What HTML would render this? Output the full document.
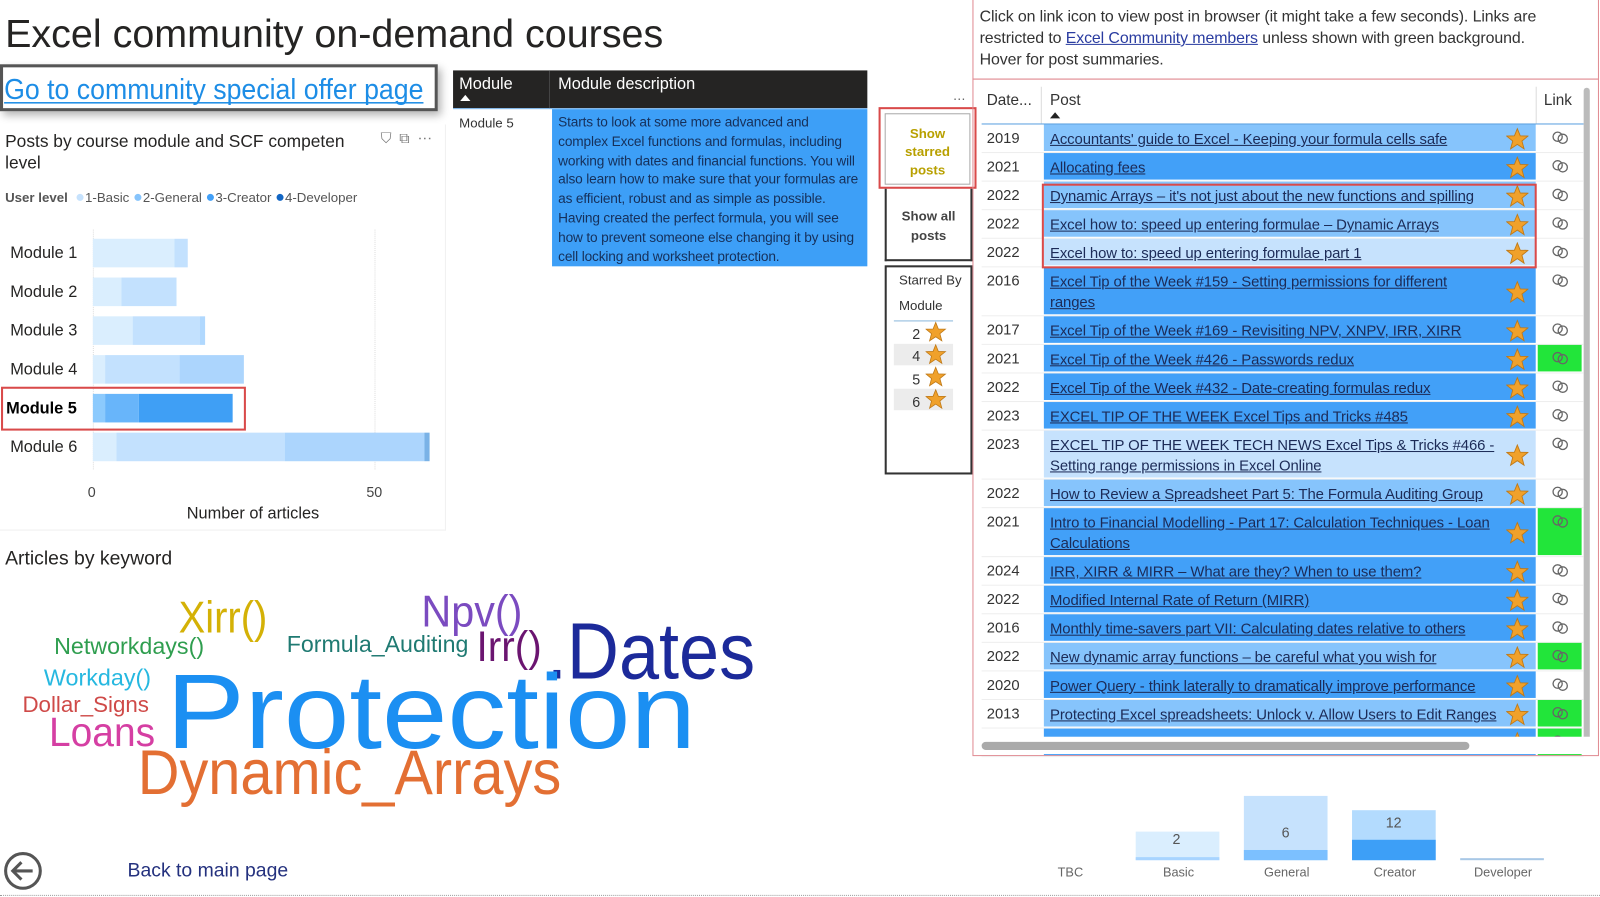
<!DOCTYPE html>
<html><head><meta charset="utf-8">
<style>
*{margin:0;padding:0;box-sizing:border-box}
body{width:1600px;height:897px;position:relative;overflow:hidden;background:#fff;font-family:"Liberation Sans",sans-serif;color:#252423}
#w{position:absolute;left:0;top:0;width:1568px;height:879px;transform:scale(1.0204);transform-origin:0 0}
.a{position:absolute}
.row{position:absolute;left:962px;width:590px}
.row .d{position:absolute;left:5px;top:6px;font-size:14.5px;color:#333}
.row .p{position:absolute;left:61px;top:0;width:482px;bottom:2px;padding:5px 30px 0 6px;font-size:14.6px;line-height:20px;color:#1c2b57;text-decoration:underline;letter-spacing:-0.1px}
.row .s{position:absolute;left:514px}
.row .l{position:absolute;left:545px;width:43px;top:0;bottom:2px}
.row .l svg{position:absolute;left:13px;top:5px}
.row .hl{position:absolute;left:0;right:0;bottom:0;height:1px;background:#eee}
.D{background:#42a0f8}.M{background:#86c4fc}.L{background:#c6e2fd}
.g{background:#22e53a}
.bar{position:absolute;height:28px}
.lab{position:absolute;top:848px;font-size:12.5px;color:#666;width:80px;text-align:center}
</style></head><body><div id="w">

<svg class="a" style="left:0;top:0" width="960" height="879">
<text x="5" y="46" font-size="38" fill="#252423" textLength="645" lengthAdjust="spacingAndGlyphs" font-family="Liberation Sans">Excel community on-demand courses</text>
<g font-family="Liberation Sans">
<text x="175" y="620" font-size="44" fill="#d4b106" textLength="87" lengthAdjust="spacingAndGlyphs">Xirr()</text>
<text x="413" y="614" font-size="44" fill="#7b4bc0" textLength="99" lengthAdjust="spacingAndGlyphs">Npv()</text>
<text x="53" y="641" font-size="23" fill="#2f9e4f" textLength="147" lengthAdjust="spacingAndGlyphs">Networkdays()</text>
<text x="281" y="639" font-size="23" fill="#1f7a72" textLength="178" lengthAdjust="spacingAndGlyphs">Formula_Auditing</text>
<text x="467" y="648" font-size="42" fill="#6b1570" textLength="64" lengthAdjust="spacingAndGlyphs">Irr()</text>
<text x="536" y="665" font-size="78" fill="#1c2a9a" textLength="204" lengthAdjust="spacingAndGlyphs">.Dates</text>
<text x="43" y="672" font-size="23" fill="#26b8e0" textLength="105" lengthAdjust="spacingAndGlyphs">Workday()</text>
<text x="22" y="698" font-size="22" fill="#cf4a48" textLength="124" lengthAdjust="spacingAndGlyphs">Dollar_Signs</text>
<text x="48" y="731" font-size="40" fill="#d53fa3" textLength="104" lengthAdjust="spacingAndGlyphs">Loans</text>
<text x="163" y="733" font-size="104" fill="#1b8ff2" textLength="519" lengthAdjust="spacingAndGlyphs">Protection</text>
<text x="135" y="778" font-size="62" fill="#e36f33" textLength="415" lengthAdjust="spacingAndGlyphs">Dynamic_Arrays</text>
</g>
</svg>

<div class="a" style="left:0;top:63px;width:429px;height:46px;border:3px solid #555;box-shadow:3px 4px 8px rgba(0,0,0,.3);background:#fff"></div>
<svg class="a" style="left:0;top:63px" width="430" height="46"><text x="4" y="34" font-size="28" fill="#1d8de6" textLength="411" lengthAdjust="spacingAndGlyphs" font-family="Liberation Sans">Go to community special offer page</text><rect x="4" y="37" width="411" height="1.5" fill="#1d8de6"/></svg>

<div class="a" style="left:0;top:122px;width:437px;height:398px;border-right:1px solid #f0f0f0;border-bottom:1px solid #f0f0f0"></div>
<div class="a" style="left:5px;top:128px;font-size:17px;line-height:21px;width:370px;color:#252423">Posts by course module and SCF competen<br>level</div>
<div class="a" style="left:373px;top:127px;font-size:14px;color:#777">⛉ &nbsp;⧉ &nbsp;⋯</div>
<div class="a" style="left:5px;top:185px;font-size:13px;color:#555;white-space:nowrap"><b>User level</b> &nbsp;<span style="color:#c6e2fd;font-size:16px">●</span>1-Basic <span style="color:#86c4fc;font-size:16px">●</span>2-General <span style="color:#42a0f8;font-size:16px">●</span>3-Creator <span style="color:#1266c4;font-size:16px">●</span>4-Developer</div>
<div class="a" style="left:91px;top:225px;height:235px;border-left:1px dotted #ddd"></div>
<div class="a" style="left:367px;top:225px;height:235px;border-left:1px dotted #ddd"></div>
<div class="a" style="left:10px;top:230px;font-size:16px;line-height:38px">Module 1<br>Module 2<br>Module 3<br>Module 4<br><b style="color:#000;margin-left:-4px">Module 5</b><br>Module 6</div>
<div class="bar" style="left:91px;top:234px;width:80px;background:#daeefe"></div><div class="bar" style="left:171px;top:234px;width:13px;background:#c3e1fe"></div>
<div class="bar" style="left:91px;top:272px;width:28px;background:#daeefe"></div><div class="bar" style="left:119px;top:272px;width:54px;background:#c3e1fe"></div>
<div class="bar" style="left:91px;top:310px;width:39px;background:#daeefe"></div><div class="bar" style="left:130px;top:310px;width:66px;background:#c3e1fe"></div><div class="bar" style="left:196px;top:310px;width:5px;background:#b0d8fe"></div>
<div class="bar" style="left:91px;top:348px;width:12px;background:#daeefe"></div><div class="bar" style="left:103px;top:348px;width:73px;background:#c3e1fe"></div><div class="bar" style="left:176px;top:348px;width:63px;background:#acd5fd"></div>
<div class="bar" style="left:91px;top:386px;width:12px;background:#8ccafd"></div><div class="bar" style="left:103px;top:386px;width:33px;background:#68b5fa"></div><div class="bar" style="left:136px;top:386px;width:92px;background:#3f9ff5"></div>
<div class="a" style="left:1px;top:379px;width:240px;height:43px;border:2px solid #d94a4a"></div>
<div class="bar" style="left:91px;top:424px;width:23px;background:#daeefe"></div><div class="bar" style="left:114px;top:424px;width:165px;background:#c3e1fe"></div><div class="bar" style="left:279px;top:424px;width:137px;background:#acd5fd"></div><div class="bar" style="left:416px;top:424px;width:5px;background:#7ab2e6"></div>
<div class="a" style="left:86px;top:474px;font-size:14px;color:#444">0</div>
<div class="a" style="left:359px;top:474px;font-size:14px;color:#444">50</div>
<div class="a" style="left:183px;top:495px;font-size:16px;color:#252423">Number of articles</div>

<div class="a" style="left:5px;top:537px;font-size:19px;color:#252423">Articles by keyword</div>

<div class="a" style="left:444px;top:69px;width:406px;height:37px;background:#252423"></div>
<div class="a" style="left:538px;top:69px;width:1px;height:37px;background:#444"></div>
<div class="a" style="left:450px;top:74px;font-size:16px;color:#fff">Module</div>
<div class="a" style="left:451px;top:93px;width:0;height:0;border-left:5px solid transparent;border-right:5px solid transparent;border-bottom:6px solid #fff"></div>
<div class="a" style="left:547px;top:74px;font-size:16px;color:#fff">Module description</div>
<div class="a" style="left:444px;top:106px;width:406px;height:1px;background:#7ab6ee"></div>
<div class="a" style="left:450px;top:113px;font-size:13px;color:#333">Module 5</div>
<div class="a" style="left:541px;top:107px;width:309px;height:154px;background:#3d9ff7;padding:4px 4px 0 6px;font-size:13.4px;line-height:18.8px;color:#16305a;letter-spacing:-0.15px;white-space:nowrap">Starts to look at some more advanced and<br>complex Excel functions and formulas, including<br>working with dates and financial functions. You will<br>also learn how to make sure that your formulas are<br>as efficient, robust and as simple as possible.<br>Having created the perfect formula, you will see<br>how to prevent someone else changing it by using<br>cell locking and worksheet protection.</div>

<div class="a" style="left:934px;top:90px;font-size:12px;color:#666">⋯</div>
<div class="a" style="left:861px;top:105px;width:96px;height:80px;border:2px solid #d94a4a"></div>
<div class="a" style="left:867px;top:111px;width:84px;height:70px;border:1px solid #aaa;text-align:center;font-size:13px;font-weight:bold;line-height:18px;color:#b8a000;padding-top:10px">Show<br>starred<br>posts</div>
<div class="a" style="left:867px;top:185px;width:86px;height:71px;border:2px solid #333;border-top:none;text-align:center;font-size:13px;font-weight:bold;line-height:19px;color:#444;padding-top:17px">Show all<br>posts</div>
<div class="a" style="left:867px;top:260px;width:86px;height:205px;border:2px solid #333"></div>
<div class="a" style="left:881px;top:262px;font-size:13px;line-height:25px;color:#333">Starred By<br>Module</div>
<div class="a" style="left:876px;top:314px;width:58px;height:1px;background:#8ab8dc"></div>
<div class="a" style="left:876px;top:337px;width:58px;height:21px;background:#ececec"></div>
<div class="a" style="left:876px;top:381px;width:58px;height:21px;background:#ececec"></div>
<div class="a" style="left:894px;top:316px;font-size:14px;line-height:22.3px;color:#333">2<br>4<br>5<br>6</div>
<svg class="a" style="left:907px;top:315px" width="22" height="90">
<defs><path id="st" d="M10 1 L12.6 7.4 19.5 7.6 14.1 12 16 19 10 15 4 19 5.9 12 0.5 7.6 7.4 7.4Z" fill="#f0a12b" stroke="#c07a18" stroke-width=".8"/></defs>
<use href="#st" y="0"/><use href="#st" y="22"/><use href="#st" y="44"/><use href="#st" y="66"/>
</svg>

<div class="a" style="left:953px;top:-2px;width:614px;height:80px;border:1.5px solid #e08a92"></div>
<div class="a" style="left:960px;top:6px;width:600px;font-size:15.6px;line-height:21px;color:#333;letter-spacing:-0.1px;white-space:nowrap">Click on link icon to view post in browser (it might take a few seconds). Links are<br>restricted to <span style="color:#2a3ca0;text-decoration:underline">Excel Community members</span> unless shown with green background.<br>Hover for post summaries.</div>
<div class="a" style="left:953px;top:77px;width:614px;height:664px;border:1.5px solid #e08a92"></div>
<div class="a" style="left:967px;top:90px;font-size:15px;color:#333">Date...</div>
<div class="a" style="left:1020px;top:85px;width:1px;height:36px;background:#ddd"></div>
<div class="a" style="left:1029px;top:90px;font-size:15px;color:#333">Post</div>
<div class="a" style="left:1029px;top:110px;width:0;height:0;border-left:5px solid transparent;border-right:5px solid transparent;border-bottom:6px solid #222"></div>
<div class="a" style="left:1505px;top:85px;width:1px;height:36px;background:#ddd"></div>
<div class="a" style="left:1513px;top:90px;font-size:15px;color:#333">Link</div>
<div class="a" style="left:962px;top:121px;width:590px;height:1px;background:#5aa0e0"></div>
<div class="a" style="left:1552px;top:86px;width:6px;height:640px;background:#bbb;border-radius:3px"></div>

<div id="rows"></div>
<div class="a" style="left:962px;top:722px;width:600px;height:17px;background:#fff"></div>
<div class="a" style="left:962px;top:727px;width:478px;height:8px;background:#aaa;border-radius:4px"></div>

<div class="a" style="left:1113px;top:815px;width:82px;height:28px;background:#daeefe"></div>
<div class="a" style="left:1113px;top:840px;width:82px;height:3px;background:#a8d4ff"></div>
<div class="a" style="left:1219px;top:780px;width:82px;height:63px;background:#c6e2fd"></div>
<div class="a" style="left:1219px;top:833px;width:82px;height:10px;background:#7cc0ff"></div>
<div class="a" style="left:1325px;top:794px;width:82px;height:49px;background:#b3dbfe"></div>
<div class="a" style="left:1325px;top:823px;width:82px;height:20px;background:#3d9ff7"></div>
<div class="a" style="left:1431px;top:841px;width:82px;height:2px;background:#a8c8e6"></div>
<div class="a" style="left:1149px;top:814px;font-size:14px;color:#555">2</div>
<div class="a" style="left:1256px;top:808px;font-size:14px;color:#555">6</div>
<div class="a" style="left:1358px;top:798px;font-size:14px;color:#555">12</div>
<div class="lab" style="left:1009px">TBC</div>
<div class="lab" style="left:1115px">Basic</div>
<div class="lab" style="left:1221px">General</div>
<div class="lab" style="left:1327px">Creator</div>
<div class="lab" style="left:1433px">Developer</div>

<svg class="a" style="left:3px;top:834px" width="40" height="40"><circle cx="19.5" cy="19.5" r="17" fill="none" stroke="#555" stroke-width="3"/><path d="M29 19.5H10M18 11L9.5 19.5 18 28" fill="none" stroke="#555" stroke-width="3"/></svg>
<div class="a" style="left:125px;top:843px;font-size:19px;color:#24317e">Back to main page</div>
<div class="a" style="left:0;top:877px;width:1600px;border-top:1px dotted #999"></div>

<script>
const R=[
["2019","Accountants' guide to Excel - Keeping your formula cells safe","M",0,28],
["2021","Allocating fees","D",0,28],
["2022","Dynamic Arrays – it's not just about the new functions and spilling","M",0,28],
["2022","Excel how to: speed up entering formulae – Dynamic Arrays","M",0,28],
["2022","Excel how to: speed up entering formulae part 1","L",0,28],
["2016","Excel Tip of the Week #159 - Setting permissions for different<br>ranges","D",0,48],
["2017","Excel Tip of the Week #169 - Revisiting NPV, XNPV, IRR, XIRR","D",0,28],
["2021","Excel Tip of the Week #426 - Passwords redux","D",1,28],
["2022","Excel Tip of the Week #432 - Date-creating formulas redux","D",0,28],
["2023","EXCEL TIP OF THE WEEK Excel Tips and Tricks #485","D",0,28],
["2023","EXCEL TIP OF THE WEEK TECH NEWS Excel Tips &amp; Tricks #466 -<br>Setting range permissions in Excel Online","L",0,48],
["2022","How to Review a Spreadsheet Part 5: The Formula Auditing Group","M",0,28],
["2021","Intro to Financial Modelling - Part 17: Calculation Techniques - Loan<br>Calculations","D",1,48],
["2024","IRR, XIRR &amp; MIRR – What are they? When to use them?","D",0,28],
["2022","Modified Internal Rate of Return (MIRR)","D",0,28],
["2016","Monthly time-savers part VII: Calculating dates relative to others","D",0,28],
["2022","New dynamic array functions – be careful what you wish for","M",1,28],
["2020","Power Query - think laterally to dramatically improve performance","D",0,28],
["2013","Protecting Excel spreadsheets: Unlock v. Allow Users to Edit Ranges","M",1,28],
["","","D",1,28]];
let y=122,h="";
const star='<svg width="22" height="22" viewBox="0 0 20 20"><path d="M10 1 L12.6 7.4 19.5 7.6 14.1 12 16 19 10 15 4 19 5.9 12 0.5 7.6 7.4 7.4Z" fill="#f0a12b" stroke="#c07a18" stroke-width=".8"/></svg>';
const lnk='<svg width="18" height="16" viewBox="0 0 18 16"><circle cx="6.5" cy="7" r="4.5" fill="none" stroke="#666" stroke-width="1.3"/><circle cx="11.5" cy="9" r="4.5" fill="none" stroke="#666" stroke-width="1.3"/></svg>';
R.forEach(r=>{
 h+=`<div class="row" style="top:${y}px;height:${r[4]}px"><div class="hl"></div><div class="d">${r[0]}</div><div class="p ${r[2]}" style="white-space:nowrap">${r[1]}</div><div class="s" style="top:${(r[4]-22)/2}px">${star}</div><div class="l ${r[3]?'g':''}">${lnk}</div></div>`;
 y+=r[4];});
document.getElementById('rows').innerHTML=h;
</script>
<div class="a" style="left:1021px;top:180px;width:485px;height:83px;border:2px solid #d94a4a"></div>
</div></body></html>
